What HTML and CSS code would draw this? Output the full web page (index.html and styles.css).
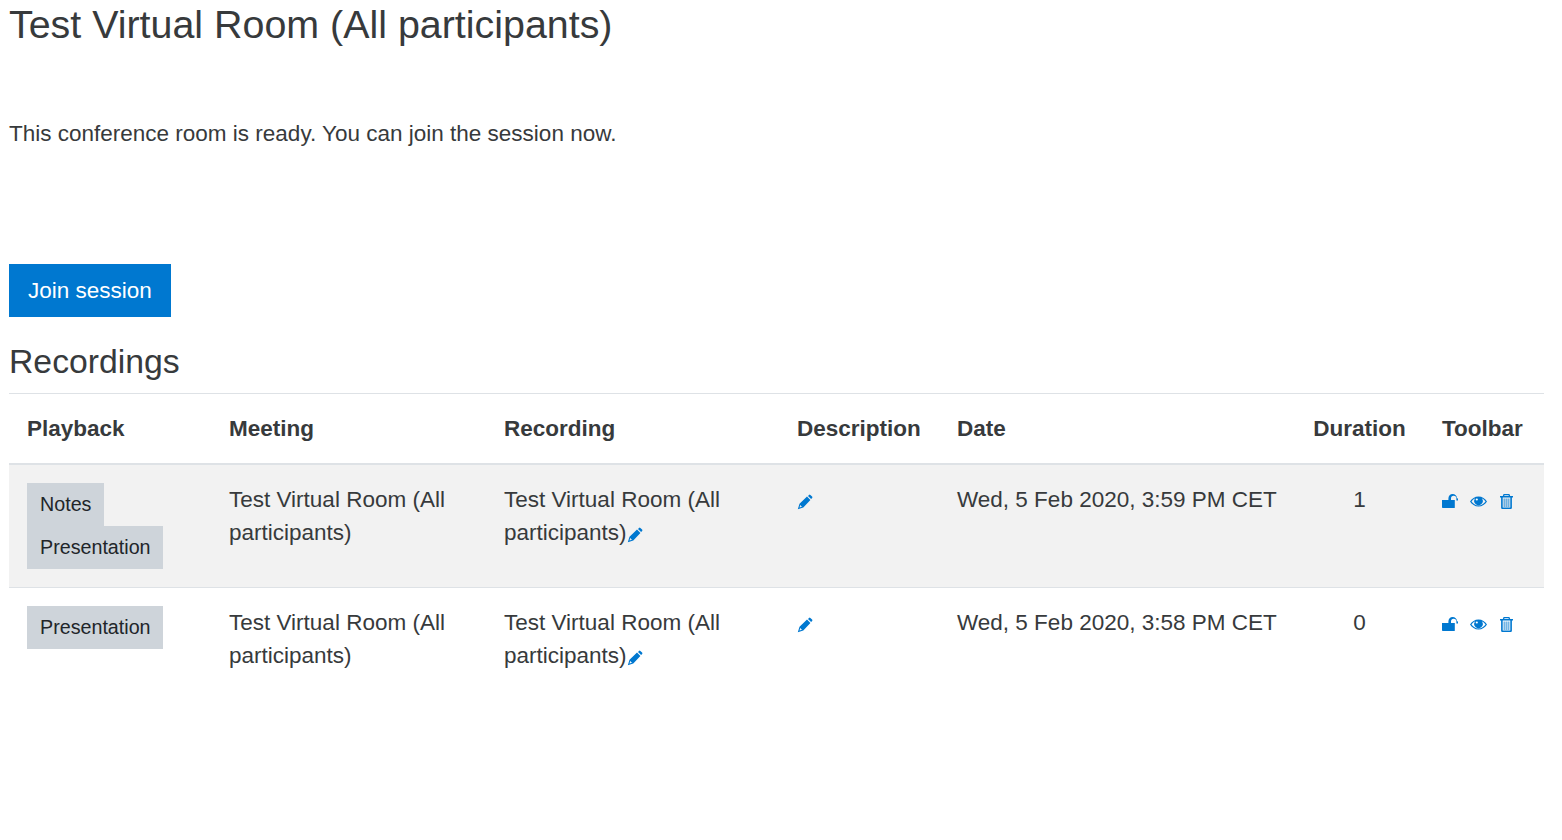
FILE: index.html
```html
<!DOCTYPE html>
<html lang="en">
<head>
<meta charset="utf-8">
<title>Test Virtual Room</title>
<link rel="stylesheet" href="styles.css">
</head>
<body>
<svg class="defs" width="0" height="0" aria-hidden="true">
  <symbol id="pencil" viewBox="0 0 16 16"><path d="M11 1.900 12 .9a1 1 0 0 1 1.400 0l1.700 1.700a1 1 0 0 1 0 1.400l-1 1Z"/><path fill-rule="evenodd" d="M10 2.600 13.400 6 6.300 13.500 .8 15.200 2.500 9.700ZM3.300 11 2.500 13.500 5 12.700 4.700 12.200 3.800 12.200 3.800 11.300Z"/></symbol>
  <symbol id="lock" viewBox="0 0 16 16"><path d="M0 7h12.800v7.400a.6.600 0 0 1-.6.600H.8a.8.800 0 0 1-.8-.8Z"/><path d="M6.400 7V5.400a4.300 4.300 0 0 1 8.600-.2l1 .2V7.400h-1.600V5.400a2.700 2.700 0 0 0-5.400 0V7Z"/></symbol>
  <symbol id="eye" viewBox="0 0 17 17"><path fill-rule="evenodd" d="M8.500 3.500c3.600 0 6.800 2.100 8.500 5-1.700 2.900-4.900 5-8.500 5S1.700 11.400 0 8.500c1.700-2.900 4.900-5 8.500-5ZM5.300 5.200C3.800 5.900 2.500 7 1.500 8.500c1.600 2.400 4 3.900 7 3.900s5.400-1.500 7-3.900c-1-1.500-2.300-2.600-3.800-3.300a4.200 4.200 0 1 1-6.400 0Z"/><circle cx="8.500" cy="7.800" r="3.600"/><circle cx="6.800" cy="6.500" r="1.100" fill="#fff"/></symbol>
  <symbol id="trash" viewBox="0 0 16 16"><path fill-rule="evenodd" d="M5.600 1h5.800l.8 2H15v1.500H13.900V14.800a1.200 1.200 0 0 1-1.200 1.200H4.300a1.200 1.200 0 0 1-1.200-1.200V4.500H2V3H4.800ZM6.500 2.300 6.200 3h4.600l-.3-.7ZM4.700 4.500V14.500H12.300V4.500Z"/><path opacity=".55" d="M5.500 5.500H7.300V14H5.500ZM7.700 5.500H9.300V14H7.700ZM9.700 5.500H11.500V14H9.700Z"/></symbol>
</svg>
<main class="page">
  <h2 class="title">Test Virtual Room (All participants)</h2>
  <p class="status">This conference room is ready. You can join the session now.</p>
  <button class="join" type="button">Join session</button>
  <h3 class="section">Recordings</h3>
  <table class="recordings">
    <colgroup>
      <col class="c-play"><col class="c-meet"><col class="c-rec"><col class="c-desc"><col class="c-date"><col class="c-dur"><col class="c-tool">
    </colgroup>
    <thead>
      <tr>
        <th>Playback</th><th>Meeting</th><th>Recording</th><th>Description</th><th>Date</th><th class="center">Duration</th><th>Toolbar</th>
      </tr>
    </thead>
    <tbody>
      <tr class="odd">
        <td><a class="pill">Notes</a><a class="pill">Presentation</a></td>
        <td>Test Virtual Room (All participants)</td>
        <td>Test Virtual Room (All participants)<svg class="ic edit-inline"><use href="#pencil"/></svg></td>
        <td><svg class="ic edit-desc"><use href="#pencil"/></svg></td>
        <td>Wed, 5 Feb 2020, 3:59 PM CET</td>
        <td class="center">1</td>
        <td><div class="tools"><svg class="ic"><use href="#lock"/></svg><svg class="ic ic-eye"><use href="#eye"/></svg><svg class="ic"><use href="#trash"/></svg></div></td>
      </tr>
      <tr>
        <td><a class="pill">Presentation</a></td>
        <td>Test Virtual Room (All participants)</td>
        <td>Test Virtual Room (All participants)<svg class="ic edit-inline"><use href="#pencil"/></svg></td>
        <td><svg class="ic edit-desc"><use href="#pencil"/></svg></td>
        <td>Wed, 5 Feb 2020, 3:58 PM CET</td>
        <td class="center">0</td>
        <td><div class="tools"><svg class="ic"><use href="#lock"/></svg><svg class="ic ic-eye"><use href="#eye"/></svg><svg class="ic"><use href="#trash"/></svg></div></td>
      </tr>
    </tbody>
  </table>
</main>
</body>
</html>
```
FILE: styles.css
```css
html, body { margin: 0; background: #fff; }
body {
  font-family: "Liberation Sans", Arial, sans-serif;
  font-size: 22.5px;
  line-height: 33px;
  color: #373a3c;
}
.defs { position: absolute; }
.page { padding: 0 18px 0 9px; }
.title {
  margin: 0;
  font-size: 39.4px;
  font-weight: 400;
  line-height: 48px;
}
.status { margin: 69px 0 0; }
.join {
  display: block;
  margin: 114px 0 0;
  height: 53px;
  padding: 0 19px;
  border: 0;
  background: #0078d0;
  color: #fff;
  font: inherit;
}
.section {
  margin: 20px 0 0;
  height: 56px;
  font-size: 33.75px;
  font-weight: 400;
  line-height: 48px;
}
.recordings {
  width: 1535px;
  table-layout: fixed;
  border-collapse: collapse;
}
.c-play { width: 202px; }
.c-meet { width: 275px; }
.c-rec { width: 293px; }
.c-desc { width: 160px; }
.c-date { width: 356px; }
.c-dur { width: 129px; }
.c-tool { width: 120px; }
th, td {
  padding: 18px;
  text-align: left;
  vertical-align: top;
  border-top: 1px solid #dee2e6;
}
th {
  font-weight: 700;
  border-bottom: 2px solid #dee2e6;
}
tbody tr:first-child td { border-top: 0; }
.center { text-align: center; }
.odd { background: #f2f2f2; }
.pill {
  display: block;
  width: fit-content;
  padding: 0 12.5px 0 13px;
  height: 43px;
  line-height: 43px;
  font-size: 19.7px;
  background: #ced4da;
  color: #212529;
}
.ic { flex: none; width: 16px; height: 16px; fill: #0078d0; }
.ic-eye { width: 17px; height: 17px; }
.edit-inline { margin-left: 0; vertical-align: -3px; }
.edit-desc { display: block; margin: 11px 0 0; }
.tools { display: flex; gap: 12px; padding-top: 10px; }
.tools .ic-eye { margin-right: -1px; }
```
